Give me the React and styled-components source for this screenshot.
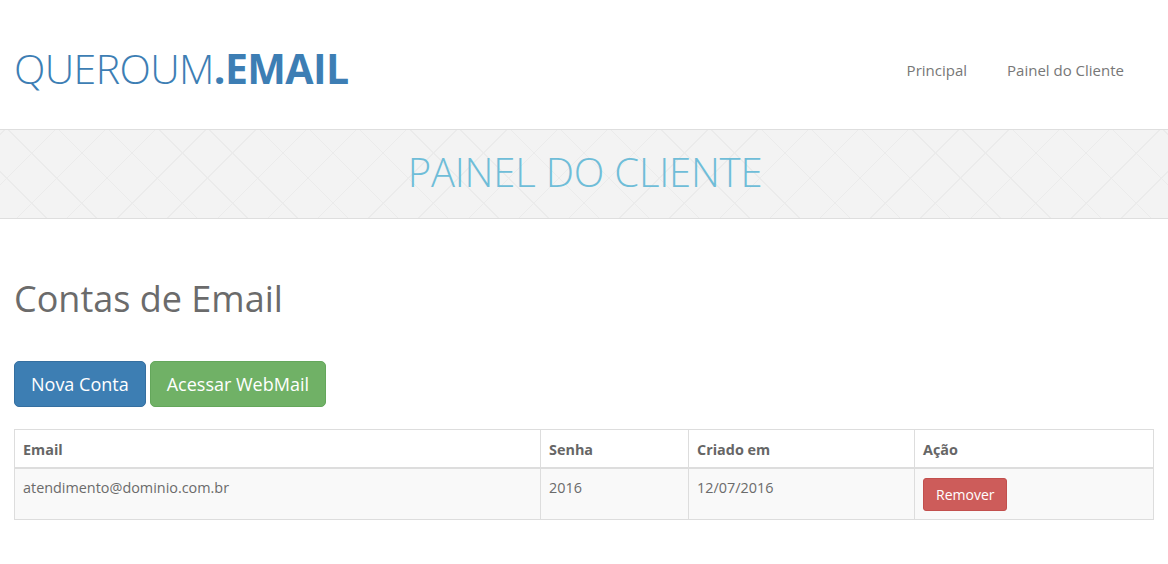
import styled, { createGlobalStyle } from "styled-components";

const GlobalStyle = createGlobalStyle`
  body {
    margin: 0;
    background: #ffffff;
    font-family: "Open Sans", "DejaVu Sans", sans-serif;
    color: #666666;
  }
  * {
    box-sizing: border-box;
  }
`;

const accounts = [
  { email: "atendimento@dominio.com.br", senha: "2016", criado: "12/07/2016" },
];

const App = () => {
  return (
    <>
      <GlobalStyle />
      <SHeader>
        <SLogo>
          QUEROUM<strong>.EMAIL</strong>
        </SLogo>
        <SNav>
          <SNavLink href="#">Principal</SNavLink>
          <SNavLink href="#">Painel do Cliente</SNavLink>
        </SNav>
      </SHeader>
      <SBanner>
        <SBannerTitle>PAINEL DO CLIENTE</SBannerTitle>
      </SBanner>
      <SMain>
        <STitle>Contas de Email</STitle>
        <SActions>
          <SButton $variant="primary">Nova Conta</SButton>
          <SButton $variant="success">Acessar WebMail</SButton>
        </SActions>
        <STable>
          <colgroup>
            <col style={{ width: "526px" }} />
            <col style={{ width: "148px" }} />
            <col style={{ width: "226px" }} />
            <col />
          </colgroup>
          <thead>
            <tr>
              <STh>Email</STh>
              <STh>Senha</STh>
              <STh>Criado em</STh>
              <STh>Ação</STh>
            </tr>
          </thead>
          <tbody>
            {accounts.map((acc) => (
              <SRow key={acc.email}>
                <STd>{acc.email}</STd>
                <STd>{acc.senha}</STd>
                <STd>{acc.criado}</STd>
                <STd>
                  <SRemoveBtn>Remover</SRemoveBtn>
                </STd>
              </SRow>
            ))}
          </tbody>
        </STable>
      </SMain>
    </>
  );
};

const SHeader = styled.header`
  height: 129px;
  padding: 0 44px 0 14px;
  display: flex;
  align-items: center;
  justify-content: space-between;
`;

const SLogo = styled.h1`
  margin: 0;
  font-size: 41px;
  font-weight: 300;
  color: #3d7eb4;
  letter-spacing: -0.6px;
  padding-top: 6px;

  strong {
    font-weight: 700;
  }
`;

const SNav = styled.nav`
  display: flex;
  gap: 40px;
  padding-top: 10px;
`;

const SNavLink = styled.a`
  font-size: 15px;
  color: #777777;
  text-decoration: none;
`;

const SBanner = styled.section`
  height: 90px;
  margin: 0 -3px;
  border-top: 1px solid #dedede;
  border-bottom: 1px solid #dedede;
  border-radius: 4px;
  background-color: #f3f3f3;
  background-image: repeating-linear-gradient(
      45deg,
      transparent 0,
      transparent 34.5px,
      #ebebeb 34.5px,
      #ebebeb 35.5px
    ),
    repeating-linear-gradient(
      -45deg,
      transparent 0,
      transparent 34.5px,
      #ebebeb 34.5px,
      #ebebeb 35.5px
    );
  display: flex;
  align-items: center;
  justify-content: center;
`;

const SBannerTitle = styled.h2`
  margin: 0;
  font-size: 40px;
  font-weight: 300;
  color: #6fbdd8;
  letter-spacing: -0.2px;
  padding: 0 0 5px 2px;
`;

const SMain = styled.main`
  width: 1140px;
  margin: 0 auto;
  padding-top: 60px;
`;

const STitle = styled.h3`
  margin: 0 0 42px;
  font-size: 36px;
  font-weight: 400;
  color: #6b6b6b;
  line-height: 1.1;
`;

const SActions = styled.div`
  display: flex;
  gap: 4px;
  margin-bottom: 22px;
`;

const SButton = styled.button`
  font-family: "Open Sans", "DejaVu Sans", sans-serif;
  font-size: 18px;
  line-height: 24px;
  padding: 10px 16px;
  height: 46px;
  border-radius: 5px;
  color: #ffffff;
  cursor: pointer;
  background: ${({ $variant }) =>
    $variant === "success" ? "#70b166" : "#3d7eb3"};
  border: 1px solid
    ${({ $variant }) => ($variant === "success" ? "#64a75b" : "#356fa0")};
`;

const STable = styled.table`
  width: 100%;
  border-collapse: collapse;
  border: 1px solid #dddddd;
  table-layout: fixed;
  font-size: 14.4px;
`;

const STh = styled.th`
  text-align: left;
  font-weight: 700;
  color: #666666;
  padding: 10px 8px 7px;
  line-height: 20px;
  border: 1px solid #dddddd;
  border-bottom: 2px solid #dddddd;
`;

const SRow = styled.tr`
  background: #f9f9f9;
`;

const STd = styled.td`
  vertical-align: top;
  padding: 9px 8px 8px;
  line-height: 20px;
  color: #6b6b6b;
  border: 1px solid #dddddd;
`;

const SRemoveBtn = styled.button`
  font-family: "Open Sans", "DejaVu Sans", sans-serif;
  font-size: 14px;
  line-height: 20px;
  padding: 6px 12px;
  height: 33px;
  width: 84px;
  border-radius: 3px;
  color: #ffffff;
  background: #cd5c5a;
  border: 1px solid #c24f4d;
  cursor: pointer;
`;

export default App;
